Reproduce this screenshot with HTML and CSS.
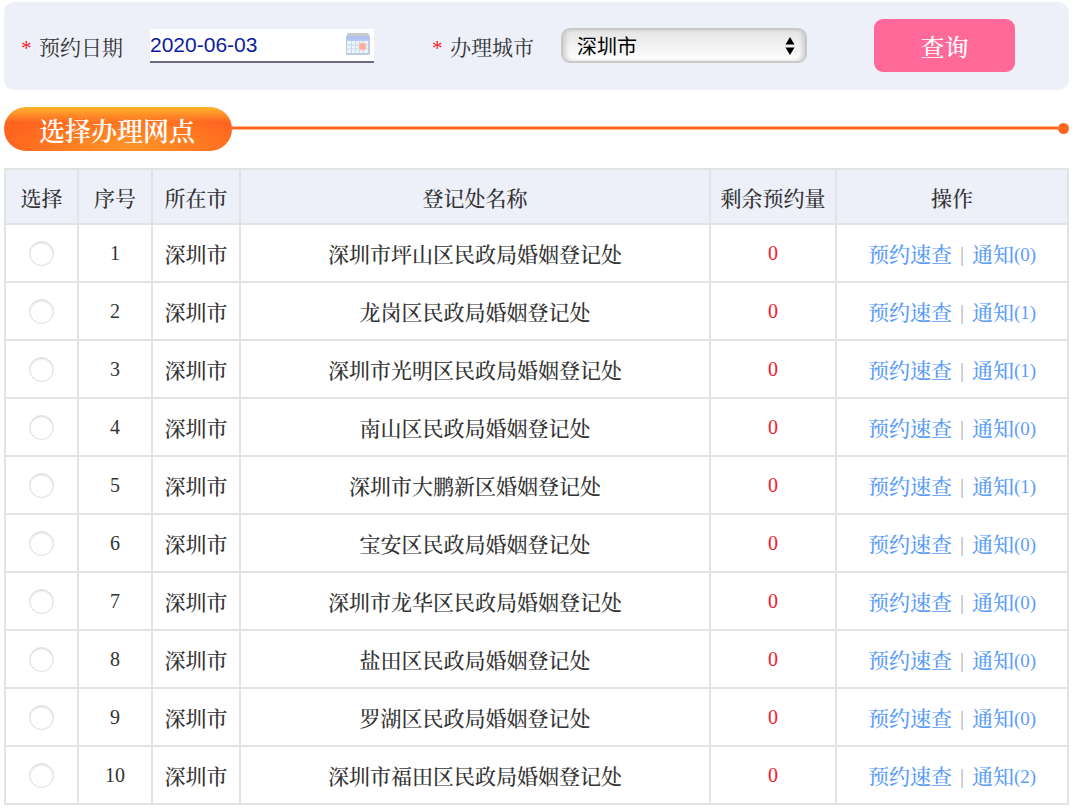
FILE: index.html
```html
<!DOCTYPE html>
<html lang="zh-CN">
<head>
<meta charset="utf-8">
<meta name="viewport" content="width=device-width, initial-scale=1">
<title>选择办理网点</title>
<link rel="stylesheet" href="styles.css">
</head>
<body>
<form class="filter">
  <div class="field date-field">
    <label class="field-label" for="date"><span class="required">*</span>预约日期</label>
    <div class="date-box">
      <input class="date-input" id="date" type="text" value="2020-06-03">
      <svg class="calendar-icon" viewBox="0 0 26 24" aria-hidden="true">
        <defs>
          <linearGradient id="calHead" x1="0" y1="0" x2="0" y2="1"><stop offset="0" stop-color="#c9c9cb"/><stop offset=".35" stop-color="#c6c9d4"/><stop offset=".5" stop-color="#a9bff0"/><stop offset="1" stop-color="#b9cdf5"/></linearGradient>
        </defs>
        <path d="M3 1h20l2 4v17a1 1 0 0 1-1 1H2a1 1 0 0 1-1-1V5z" fill="#bccbe0"/>
        <path d="M3 1h20l2 4v4H1V5z" fill="url(#calHead)"/>
        <path d="M2 9h21v12H2z" fill="#eef4fc"/>
        <path d="M6.500 9v12M10.500 9v12M14.500 9v12M18.500 9v12M2 13h21M2 17h21" stroke="#c9d9ee" stroke-width="1"/>
        <rect x="14" y="11" width="7" height="7" rx="2" fill="#f5b19c" stroke="#f6cdc2"/>
      </svg>
    </div>
  </div>
  <div class="field city-field">
    <label class="field-label" for="city"><span class="required">*</span>办理城市</label>
    <div class="select-box">
      <select class="city-select" id="city"><option>深圳市</option></select>
      <svg class="select-arrows" viewBox="0 0 10 18" aria-hidden="true"><path d="M5 0l4.500 7.500h-9zM5 18L.5 10.500h9z"/></svg>
    </div>
  </div>
  <button class="search" type="button">查询</button>
</form>

<div class="section-title">
  <h2 class="pill">选择办理网点</h2>
  <span class="rule"></span>
  <span class="dot"></span>
</div>

<table class="offices">
  <colgroup><col class="col-pick"><col class="col-index"><col class="col-city"><col><col class="col-left"><col class="col-action"></colgroup>
  <thead>
    <tr><th>选择</th><th>序号</th><th>所在市</th><th>登记处名称</th><th>剩余预约量</th><th>操作</th></tr>
  </thead>
  <tbody>
    <tr><td><input class="pick" type="radio" name="office" aria-label="深圳市坪山区民政局婚姻登记处"></td><td class="num">1</td><td>深圳市</td><td>深圳市坪山区民政局婚姻登记处</td><td class="num left">0</td><td class="action"><a href="#">预约速查</a><span class="bar">|</span><a href="#">通知<span class="count">(0)</span></a></td></tr>
    <tr><td><input class="pick" type="radio" name="office" aria-label="龙岗区民政局婚姻登记处"></td><td class="num">2</td><td>深圳市</td><td>龙岗区民政局婚姻登记处</td><td class="num left">0</td><td class="action"><a href="#">预约速查</a><span class="bar">|</span><a href="#">通知<span class="count">(1)</span></a></td></tr>
    <tr><td><input class="pick" type="radio" name="office" aria-label="深圳市光明区民政局婚姻登记处"></td><td class="num">3</td><td>深圳市</td><td>深圳市光明区民政局婚姻登记处</td><td class="num left">0</td><td class="action"><a href="#">预约速查</a><span class="bar">|</span><a href="#">通知<span class="count">(1)</span></a></td></tr>
    <tr><td><input class="pick" type="radio" name="office" aria-label="南山区民政局婚姻登记处"></td><td class="num">4</td><td>深圳市</td><td>南山区民政局婚姻登记处</td><td class="num left">0</td><td class="action"><a href="#">预约速查</a><span class="bar">|</span><a href="#">通知<span class="count">(0)</span></a></td></tr>
    <tr><td><input class="pick" type="radio" name="office" aria-label="深圳市大鹏新区婚姻登记处"></td><td class="num">5</td><td>深圳市</td><td>深圳市大鹏新区婚姻登记处</td><td class="num left">0</td><td class="action"><a href="#">预约速查</a><span class="bar">|</span><a href="#">通知<span class="count">(1)</span></a></td></tr>
    <tr><td><input class="pick" type="radio" name="office" aria-label="宝安区民政局婚姻登记处"></td><td class="num">6</td><td>深圳市</td><td>宝安区民政局婚姻登记处</td><td class="num left">0</td><td class="action"><a href="#">预约速查</a><span class="bar">|</span><a href="#">通知<span class="count">(0)</span></a></td></tr>
    <tr><td><input class="pick" type="radio" name="office" aria-label="深圳市龙华区民政局婚姻登记处"></td><td class="num">7</td><td>深圳市</td><td>深圳市龙华区民政局婚姻登记处</td><td class="num left">0</td><td class="action"><a href="#">预约速查</a><span class="bar">|</span><a href="#">通知<span class="count">(0)</span></a></td></tr>
    <tr><td><input class="pick" type="radio" name="office" aria-label="盐田区民政局婚姻登记处"></td><td class="num">8</td><td>深圳市</td><td>盐田区民政局婚姻登记处</td><td class="num left">0</td><td class="action"><a href="#">预约速查</a><span class="bar">|</span><a href="#">通知<span class="count">(0)</span></a></td></tr>
    <tr><td><input class="pick" type="radio" name="office" aria-label="罗湖区民政局婚姻登记处"></td><td class="num">9</td><td>深圳市</td><td>罗湖区民政局婚姻登记处</td><td class="num left">0</td><td class="action"><a href="#">预约速查</a><span class="bar">|</span><a href="#">通知<span class="count">(0)</span></a></td></tr>
    <tr><td><input class="pick" type="radio" name="office" aria-label="深圳市福田区民政局婚姻登记处"></td><td class="num">10</td><td>深圳市</td><td>深圳市福田区民政局婚姻登记处</td><td class="num left">0</td><td class="action"><a href="#">预约速查</a><span class="bar">|</span><a href="#">通知<span class="count">(2)</span></a></td></tr>
  </tbody>
</table>
</body>
</html>
```
FILE: styles.css
```css
* { box-sizing: border-box; }

body {
  margin: 0;
  padding: 2px 11px 5px 4px;
  background: #fff;
  color: #333;
  font: 500 21px/28px "Liberation Serif", "Noto Serif CJK SC", "Noto Sans CJK SC", serif;
}

.filter {
  display: flex;
  align-items: center;
  padding: 17px 54px 18px 17px;
  border-radius: 10px;
  background: #edf0f9;
}

.field { display: flex; align-items: center; }
.date-field { margin-right: 58px; }
.field-label {
  display: flex;
  padding-top: 5px;
  margin-right: 27px;
  font-weight: 400;
  white-space: nowrap;
}
.required { width: 18px; color: #f8182c; }

.date-box { position: relative; width: 224px; }
.date-input {
  display: block;
  width: 100%;
  height: 34px;
  padding: 0 32px 0 0;
  border: 0;
  border-bottom: 2px solid #6e6a86;
  background: #fff;
  color: #0c1c9c;
  font: 21px "Liberation Sans", sans-serif;
}
.calendar-icon {
  position: absolute;
  top: 3px;
  right: 3px;
  width: 26px;
  height: 24px;
}

.select-box { position: relative; width: 246px; }
.city-select {
  display: block;
  width: 100%;
  height: 35px;
  padding: 0 32px 0 14px;
  appearance: none;
  border: 2px solid #c8c8c8;
  border-radius: 9px;
  background: linear-gradient(#e4e4e4, #fff);
  box-shadow: inset 4px 0 5px -2px #c8c8c8, inset -4px 0 5px -2px #c8c8c8;
  color: #000;
  font: 20px "Noto Sans CJK SC", sans-serif;
}
.select-arrows {
  position: absolute;
  top: 9px;
  right: 12px;
  width: 10px;
  height: 18px;
  pointer-events: none;
}

.search {
  width: 141px;
  height: 53px;
  margin-left: auto;
  padding: 0;
  border: 0;
  border-radius: 9px;
  background: #ff6999;
  color: #fff;
  font: 500 24px "Noto Serif CJK SC", "Noto Sans CJK SC", sans-serif;
}

.section-title {
  display: flex;
  align-items: center;
  margin: 17px 0;
}
.pill {
  width: 228px;
  height: 44px;
  margin: 0;
  padding: 2px 0 0 35px;
  border-radius: 22px;
  background:
    linear-gradient(rgba(255, 190, 48, .9), rgba(255, 190, 48, 0) 35%),
    radial-gradient(ellipse 55% 80% at 55% 90%, #ff9526, #ff651f);
  color: #fff;
  font-size: 26px;
  font-weight: 600;
  line-height: 48px;
}
.rule {
  flex: 1;
  height: 4px;
  margin-top: -2px;
  border: solid #ffb48f;
  border-width: 1px 0;
  background: #ff6720;
}
.dot {
  width: 11px;
  height: 11px;
  margin-top: -2px;
  border-radius: 50%;
  background: #ff6720;
}

.offices {
  width: 100%;
  table-layout: fixed;
  border-collapse: collapse;
}
.col-pick { width: 73px; }
.col-index { width: 74px; }
.col-city { width: 88px; }
.col-left { width: 126px; }
.col-action { width: 232px; }

.offices th,
.offices td {
  height: 58px;
  padding: 3px 0 0;
  border: 2px solid #e3e3e3;
  text-align: center;
  vertical-align: middle;
  white-space: nowrap;
}
.offices th {
  height: 55px;
  padding-top: 4px;
  background: #edf0f9;
  font-weight: 500;
}
.offices .num { padding: 0; font-size: 20px; }
.offices .left { color: #f8182c; }
.offices .action { padding-top: 2px; }
.offices a { color: #5c9dfa; text-decoration: none; }
.count { font-size: 19px; vertical-align: 1px; }
.bar { margin: 0 8px; color: #aaa; font-size: 20px; vertical-align: 1px; }

.pick {
  display: block;
  width: 25px;
  height: 25px;
  margin: 0 auto 3px;
  appearance: none;
  border: 1px solid #dedede;
  border-radius: 50%;
  background: #fff;
  box-shadow: inset 0 1px 2px #d8d8d8;
}
.pick:checked { background: radial-gradient(#5c9dfa 35%, #fff 40%); }
```
